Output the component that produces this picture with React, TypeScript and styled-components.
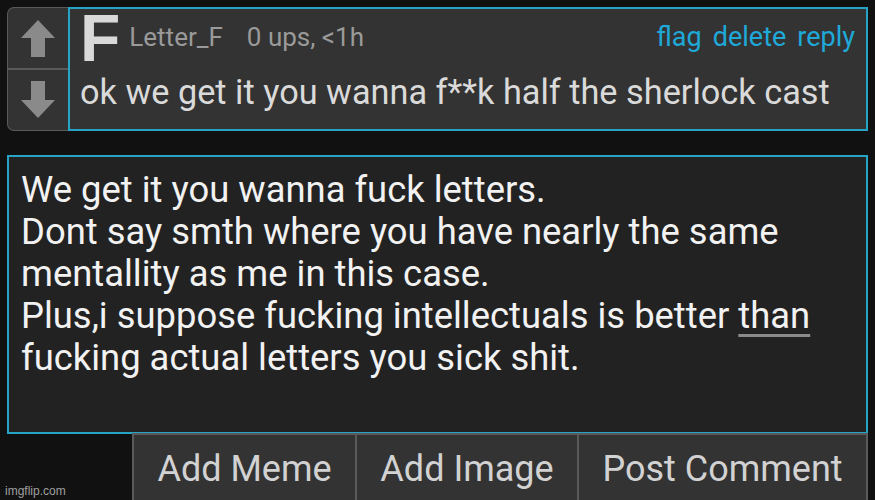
import React from "react";
import styled, { createGlobalStyle } from "styled-components";

const Global = createGlobalStyle`
  html, body { margin: 0; padding: 0; background: #111111; overflow: hidden; }
  body { font-family: Roboto, "Noto Sans", "Liberation Sans", sans-serif; }
`;

const Page = styled.div`
  width: 875px;
  height: 500px;
  box-sizing: border-box;
  padding: 7px 7px 0 7px;
  display: flex;
  flex-direction: column;
  position: relative;
  overflow: hidden;
`;

const Comment = styled.div`
  display: flex;
  height: 124px;
  width: 861px;
  flex-shrink: 0;
`;

const Votes = styled.div`
  width: 61px;
  display: flex;
  flex-direction: column;
  background: #333333;
  border: 1px solid #5a5a5a;
  border-right: none;
  border-radius: 7px 0 0 7px;
  box-sizing: border-box;
`;

const VoteCell = styled.div<{ $top?: boolean }>`
  flex: 1;
  display: flex;
  align-items: center;
  justify-content: center;
  border-bottom: ${(p) => (p.$top ? "2px solid #5a5a5a" : "none")};
`;

const Body = styled.div`
  flex: 1;
  background: #333333;
  border: 2px solid #27a3c6;
  box-sizing: border-box;
  padding: 0 11px 0 10px;
  display: flex;
  flex-direction: column;
`;

const Header = styled.div`
  display: flex;
  align-items: flex-start;
  height: 52px;
`;

const Initial = styled.span`
  font-family: "Liberation Sans", Arial, sans-serif;
  font-weight: 700;
  font-size: 66px;
  line-height: 74px;
  height: 52px;
  color: #d9d9d9;
  margin-right: 9px;
  margin-top: -8px;
`;

const Meta = styled.span<{ $gap?: number }>`
  font-size: 26px;
  color: #9a9a9a;
  line-height: 30px;
  margin-top: 13px;
  margin-right: ${(p) => p.$gap ?? 0}px;
`;

const Links = styled.div`
  margin-left: auto;
  display: flex;
  gap: 11px;
  margin-top: 13px;
`;

const Link = styled.span`
  font-size: 27px;
  color: #1fa9d9;
  line-height: 30px;
`;

const Text = styled.div`
  font-size: 34.3px;
  color: #dadada;
  line-height: 36px;
  margin-top: 13px;
  white-space: nowrap;
`;

const Editor = styled.div`
  margin-top: 24px;
  width: 861px;
  height: 279px;
  flex-shrink: 0;
  box-sizing: border-box;
  background: #222222;
  border: 2px solid #27a3c6;
  padding: 12px 12px;
  font-size: 36.4px;
  line-height: 42px;
  color: #f2f2f2;
  white-space: pre;
`;

const Spell = styled.span`
  text-decoration: underline;
  text-decoration-color: #8a8a8a;
  text-decoration-thickness: 3px;
  text-underline-offset: 6px;
`;

const Buttons = styled.div`
  display: flex;
  margin-left: 125px;
  margin-top: -1px;
  width: 736px;
  height: 67px;
  flex-shrink: 0;
`;

const Button = styled.div<{ $w: number }>`
  width: ${(p) => p.$w}px;
  box-sizing: border-box;
  background: #333333;
  border: 2px solid #5a5a5a;
  border-right: none;
  border-bottom: none;
  color: #d2d2d2;
  font-size: 36px;
  line-height: 40px;
  display: flex;
  justify-content: center;
  padding-top: 14px;
  white-space: nowrap;
  &:last-child { border-right: 2px solid #5a5a5a; }
`;

const Watermark = styled.div`
  position: absolute;
  left: 5px;
  bottom: 2px;
  font-size: 12px;
  color: #a0a0a0;
  font-family: "Liberation Sans", Arial, sans-serif;
`;

const Arrow = ({ down }: { down?: boolean }) => (
  <svg width="36" height="38" viewBox="0 0 36 38" style={{ transform: down ? "rotate(180deg)" : undefined }}>
    <path d="M18 1 L35 19 L25 19 L25 38 L11 38 L11 19 L1 19 Z" fill="#8a8a8a" />
  </svg>
);

export default function App() {
  return (
    <>
      <Global />
      <Page>
        <Comment>
          <Votes>
            <VoteCell $top>
              <Arrow />
            </VoteCell>
            <VoteCell>
              <Arrow down />
            </VoteCell>
          </Votes>
          <Body>
            <Header>
              <Initial>F</Initial>
              <Meta $gap={24}>Letter_F</Meta>
              <Meta>0 ups, &lt;1h</Meta>
              <Links>
                <Link>flag</Link>
                <Link>delete</Link>
                <Link>reply</Link>
              </Links>
            </Header>
            <Text>ok we get it you wanna f**k half the sherlock cast</Text>
          </Body>
        </Comment>
        <Editor>
          We get it you wanna fuck letters.
          {"\n"}Dont say smth where you have nearly the same
          {"\n"}mentallity as me in this case.
          {"\n"}Plus,i suppose fucking intellectuals is better <Spell>than</Spell>
          {"\n"}fucking actual letters you sick shit.
        </Editor>
        <Buttons>
          <Button $w={223}>Add Meme</Button>
          <Button $w={222}>Add Image</Button>
          <Button $w={291}>Post Comment</Button>
        </Buttons>
        <Watermark>imgflip.com</Watermark>
      </Page>
    </>
  );
}
